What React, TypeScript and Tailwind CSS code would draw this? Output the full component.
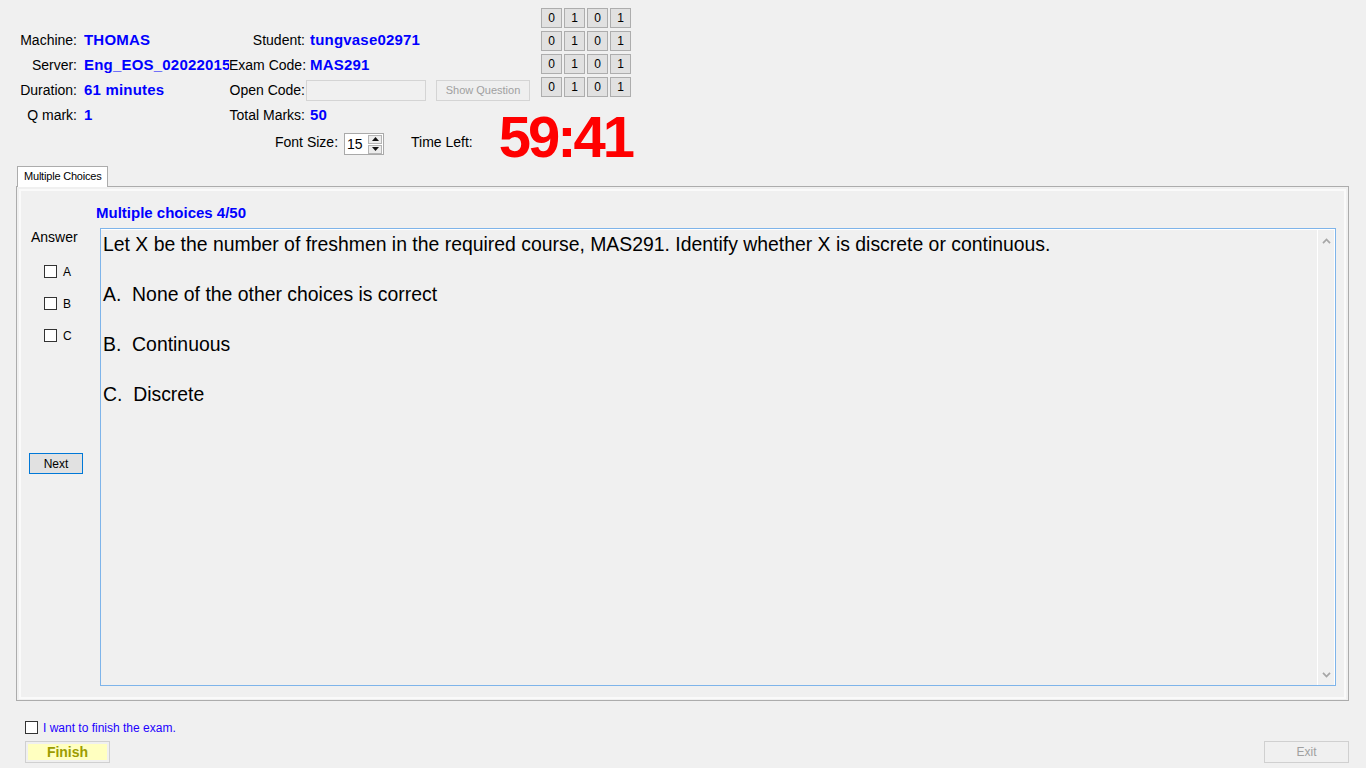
import React from "react";

const bits = ["0", "1", "0", "1"];

function Chevron({ up }: { up?: boolean }) {
  return (
    <svg width="9" height="6" viewBox="0 0 9 6" className="text-[#a6a6a6]">
      <path
        d={up ? "M1 5.2 L4.5 1.5 L8 5.2" : "M1 0.8 L4.5 4.5 L8 0.8"}
        stroke="currentColor"
        strokeWidth="1.7"
        fill="none"
      />
    </svg>
  );
}

function InfoRow({
  label,
  value,
  label2,
  children,
}: {
  label: string;
  value: string;
  label2: string;
  children: React.ReactNode;
}) {
  return (
    <div className="flex h-[25px] items-center whitespace-nowrap">
      <span className="w-[77px] text-right text-[14px] text-black">{label}</span>
      <span className="ml-[7px] w-[145px] overflow-hidden text-[15px] font-bold tracking-[0.2px] text-[#0000ff]">
        {value}
      </span>
      <span className="w-[76px] text-right text-[14px] text-black">{label2}</span>
      {children}
    </div>
  );
}

function Value2({ children }: { children: React.ReactNode }) {
  return (
    <span className="ml-[5px] text-[15px] font-bold tracking-[0.2px] text-[#0000ff]">{children}</span>
  );
}

function Box() {
  return <span className="inline-block h-[13px] w-[13px] border border-[#333] bg-white" />;
}

export default function App() {
  return (
    <div className="flex h-[768px] w-[1366px] flex-col overflow-hidden bg-[#f0f0f0] font-['Liberation_Sans',Arial,sans-serif] text-black">
      {/* header info */}
      <div className="flex h-[128px]">
        <div className="w-[541px] pt-[28px]">
          <InfoRow label="Machine:" value="THOMAS" label2="Student:">
            <Value2>tungvase02971</Value2>
          </InfoRow>
          <InfoRow label="Server:" value="Eng_EOS_02022015" label2="Exam Code:">
            <Value2>MAS291</Value2>
          </InfoRow>
          <InfoRow label="Duration:" value="61 minutes" label2="Open Code:">
            <div className="ml-[1px] h-[21px] w-[120px] border border-[#d4d4d4] bg-[#f0f0f0]" />
            <button className="ml-[10px] h-[21px] w-[94px] border border-[#d4d4d4] bg-[#efefef] text-[11px] text-[#a0a0a0]">
              Show Question
            </button>
          </InfoRow>
          <InfoRow label="Q mark:" value="1" label2="Total Marks:">
            <Value2>50</Value2>
          </InfoRow>
        </div>
        <div className="grid grid-cols-[repeat(4,21px)] content-start gap-x-[2px] gap-y-[3px] pt-[8px]">
          {[0, 1, 2, 3].map((r) =>
            bits.map((b, i) => (
              <div
                key={`${r}-${i}`}
                className="flex h-[20px] w-[21px] items-center justify-center border border-[#adadad] bg-[#e1e1e1] text-[12px] text-black"
              >
                {b}
              </div>
            ))
          )}
        </div>
      </div>

      {/* font size / timer */}
      <div className="mt-[5px] flex h-[22px] items-center whitespace-nowrap pl-[275px] text-[14px]">
        <span className="-mt-[3px]">Font Size:</span>
        <div className="ml-[6px] flex h-[22px] w-[40px] items-center border border-[#a9a9a9] bg-white">
          <span className="ml-[2px] flex-1 text-[14px]">15</span>
          <div className="mr-[1px] flex flex-col gap-[1px]">
            <div className="flex h-[9px] w-[14px] items-center justify-center border border-[#b5b5b5] bg-[#ececec]">
              <svg width="7" height="4" viewBox="0 0 7 4">
                <path d="M0 4 L3.5 0 L7 4 Z" fill="#111" />
              </svg>
            </div>
            <div className="flex h-[9px] w-[14px] items-center justify-center border border-[#b5b5b5] bg-[#ececec]">
              <svg width="7" height="4" viewBox="0 0 7 4">
                <path d="M0 0 L3.5 4 L7 0 Z" fill="#111" />
              </svg>
            </div>
          </div>
        </div>
        <span className="ml-[27px] -mt-[3px]">Time Left:</span>
        <span className="ml-[26px] -mt-[25px] self-start text-[58px] font-bold leading-none tracking-[-3px] text-[#ff0000]">
          59:41
        </span>
      </div>

      {/* tab control */}
      <div className="mt-[11px] flex">
        <div className="relative z-10 ml-[17px] -mb-[1px] h-[21px] w-[91px] border border-b-0 border-[#acacac] bg-white pl-[6px] text-[11px] leading-[19px] tracking-[-0.2px]">
          Multiple Choices
        </div>
      </div>
      <div className="ml-[16px] h-[515px] w-[1333px] border border-[#acacac] px-[2px] pt-[2px] pb-[1px]">
        <div className="flex h-full border-2 border-[#fafafa]">
          {/* answer column */}
          <div className="flex w-[79px] flex-col pl-[8px] pt-[37px]">
            <span className="h-[18px] pl-[2px] text-[14px] leading-[18px]">Answer</span>
            {["A", "B", "C"].map((l) => (
              <div key={l} className="mt-[19px] flex h-[13px] items-center">
                <span className="ml-[15px] inline-block h-[13px] w-[13px] border border-[#333] bg-white" />
                <span className="ml-[6px] text-[12px]">{l}</span>
              </div>
            ))}
            <button className="mt-[111px] h-[21px] w-[54px] border border-[#0078d7] bg-[#e1e1e1] text-[12px]">
              Next
            </button>
          </div>

          {/* question column */}
          <div className="flex flex-1 flex-col pr-[8px] pb-[11px] pt-[13px]">
            <div className="-ml-[4px] mb-[6px] h-[18px] text-[15px] font-bold leading-[18px] text-[#0000ff]">
              Multiple choices 4/50
            </div>
            <div className="flex flex-1 border border-[#7eb4ea] bg-[#f0f0f0]">
              <div className="flex flex-1 border-t border-white">
                <div className="flex-1 pl-[2px] pt-[2px] text-[19.4px] leading-[25px]">
                  <p className="mb-[25px]">
                    Let X be the number of freshmen in the required course, MAS291. Identify whether X is
                    discrete or continuous.
                  </p>
                  <p className="mb-[25px] whitespace-pre">A.  None of the other choices is correct</p>
                  <p className="mb-[25px] whitespace-pre">B.  Continuous</p>
                  <p className="mb-[25px] whitespace-pre">C.  Discrete</p>
                </div>
                <div className="flex w-[18px] flex-col items-center justify-between border-x border-white pt-[8px] pb-[7px]">
                  <Chevron up />
                  <Chevron />
                </div>
              </div>
            </div>
          </div>
        </div>
      </div>

      {/* footer */}
      <div className="mt-[20px] ml-[25px] flex h-[13px] items-center">
        <Box />
        <span className="ml-[5px] text-[12px] text-[#2200ff]">I want to finish the exam.</span>
      </div>
      <div className="mt-[7px] flex px-[25px] pr-[17px]">
        <button className="h-[22px] w-[85px] border border-[#d0d0d0] p-[2px]">
          <div className="flex h-full items-center justify-center bg-[#ffffc0] text-[14px] font-bold text-[#9c9c00]">
            Finish
          </div>
        </button>
        <button className="ml-auto h-[22px] w-[85px] border border-[#d0d0d0] bg-[#f0f0f0] text-[12px] text-[#a0a0a0]">
          Exit
        </button>
      </div>
    </div>
  );
}
